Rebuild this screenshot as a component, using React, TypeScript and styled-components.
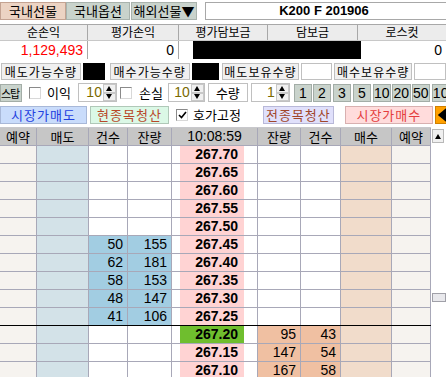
import React from 'react';
import styled, { createGlobalStyle } from 'styled-components';

const Global = createGlobalStyle`
  html, body { margin: 0; padding: 0; background: #fff; }
  body { font-family: "Noto Sans CJK KR", "Noto Sans", sans-serif; font-size: 12px; color: #000; }
  #root { width: 446px; height: 377px; overflow: hidden; }
  * { box-sizing: border-box; }
`;

const KR = `"Noto Sans CJK KR", "Noto Sans", sans-serif`;
const NUM = `"Liberation Sans Narrow", "Liberation Sans", Arial, sans-serif`;

/* ---------- top bar ---------- */
const TopBar = styled.div`
  display: flex;
  align-items: flex-start;
  height: 24px;
  padding-top: 2px;
`;
const Tab = styled.div<{ $active?: boolean; $w: number; $mr: number }>`
  width: ${p => p.$w}px;
  margin-right: ${p => p.$mr}px;
  height: 18px;
  background: ${p => (p.$active ? '#ecd3c3' : '#c9d3cc')};
  border: 1px solid ${p => (p.$active ? '#c4a392' : '#a9b3ad')};
  font-family: ${KR};
  font-size: 13px;
  line-height: 16px;
  text-align: center;
  white-space: nowrap;
`;
const CodeField = styled.div`
  flex: 1;
  height: 18px;
  border: 1px solid #a8a8a8;
  border-right: none;
  font-family: "Liberation Sans", Arial, sans-serif;
  font-weight: bold;
  font-size: 13px;
  line-height: 16px;
  text-align: center;
  padding-right: 4px;
`;

/* ---------- summary ---------- */
const SumHead = styled.div`
  display: grid;
  grid-template-columns: 88px 91px 89px 90px 88px;
  border-top: 1px solid #a8a8a8;
  border-bottom: 1px solid #c8c8c8;
`;
const SumHeadCell = styled.div`
  height: 15px;
  background: #ececec;
  border-right: 1px solid #a8a8a8;
  font-family: ${KR};
  font-size: 12px;
  line-height: 14px;
  text-align: center;
  &:last-child { border-right: none; }
`;
const SumVals = styled.div`
  display: grid;
  grid-template-columns: 88px 91px 14px 168px 85px;
  height: 18px;
`;
const SumVal = styled.div<{ $tone?: 'red' | 'black' | 'plain'; $line?: boolean }>`
  background: ${p => (p.$tone === 'black' ? '#000' : '#fff')};
  color: ${p => (p.$tone === 'red' ? '#ff0000' : '#000')};
  border-right: ${p => (p.$line ? '1px solid #a8a8a8' : 'none')};
  font-family: ${NUM};
  font-size: 14px;
  line-height: 18px;
  text-align: right;
  padding-right: 4px;
`;

/* ---------- qty row ---------- */
const QtyRow = styled.div`
  display: flex;
  margin-top: 4px;
  height: 17px;
`;
const QtyLabel = styled.div<{ $w: number; $ml: number }>`
  width: ${p => p.$w}px;
  margin-left: ${p => p.$ml}px;
  height: 17px;
  background: #f0f0f0;
  border: 1px solid #c0c0c0;
  font-family: ${KR};
  font-size: 12px;
  letter-spacing: 1px;
  line-height: 15px;
  text-align: center;
  white-space: nowrap;
`;
const QtyBox = styled.div<{ $w: number; $ml: number; $dark?: boolean }>`
  width: ${p => p.$w}px;
  margin-left: ${p => p.$ml}px;
  height: 17px;
  background: ${p => (p.$dark ? '#000' : '#fff')};
  border: 1px solid ${p => (p.$dark ? '#000' : '#c0c0c0')};
`;

/* ---------- control row ---------- */
const CtrlRow = styled.div`
  display: flex;
  align-items: center;
  margin-top: 3px;
  height: 19px;
`;
const GreyBtn = styled.div<{ $w: number; $ml: number }>`
  width: ${p => p.$w}px;
  margin-left: ${p => p.$ml}px;
  flex-shrink: 0;
  height: 18px;
  background: #c9d3cc;
  border: 1px solid #a3ada7;
  font-family: ${NUM};
  font-size: 14px;
  line-height: 16px;
  text-align: center;
  overflow: hidden;
  white-space: nowrap;
`;
const StopBtn = styled(GreyBtn)`
  font-family: ${KR};
  font-size: 11px;
  letter-spacing: -1px;
  text-align: left;
  padding: 0;
`;
const Check = styled.div<{ $ml: number }>`
  width: 12px;
  height: 12px;
  margin-left: ${p => p.$ml}px;
  flex-shrink: 0;
  background: #fff;
  border: 1px solid #8a8a8a;
  border-right-color: #d8d8d8;
  border-bottom-color: #d8d8d8;
  display: flex;
  align-items: center;
  justify-content: center;
`;
const Text = styled.span<{ $ml: number }>`
  margin-left: ${p => p.$ml}px;
  font-family: ${KR};
  font-size: 13px;
  line-height: 16px;
  white-space: nowrap;
  flex-shrink: 0;
`;
const Spin = styled.div<{ $w: number; $ml: number }>`
  display: flex;
  width: ${p => p.$w}px;
  margin-left: ${p => p.$ml}px;
  flex-shrink: 0;
  height: 19px;
  border: 1px solid #c0c0c0;
  background: #fff;
`;
const SpinVal = styled.div`
  flex: 1;
  font-family: ${NUM};
  font-size: 14px;
  line-height: 17px;
  color: #7a6a00;
  text-align: right;
  padding-right: 1px;
`;
const SpinArrows = styled.div`
  width: 13px;
  display: flex;
  flex-direction: column;
`;
const SpinArrow = styled.div`
  flex: 1;
  background: #f0f0f0;
  border: 1px solid #c8c8c8;
  display: flex;
  align-items: center;
  justify-content: center;
`;
const LabelBox = styled.div<{ $w: number; $ml: number }>`
  width: ${p => p.$w}px;
  margin-left: ${p => p.$ml}px;
  flex-shrink: 0;
  height: 19px;
  border: 1px solid #c0c0c0;
  font-family: ${KR};
  font-size: 13px;
  line-height: 17px;
  text-align: center;
`;

/* ---------- action row ---------- */
const ActRow = styled.div`
  display: flex;
  align-items: center;
  margin-top: 3px;
  height: 19px;
`;
const ActBtn = styled.div<{ $w: number; $ml: number; $bg: string; $fg: string; $bd: string }>`
  width: ${p => p.$w}px;
  margin-left: ${p => p.$ml}px;
  flex-shrink: 0;
  height: 18px;
  background: ${p => p.$bg};
  color: ${p => p.$fg};
  border: 1px solid ${p => p.$bd};
  font-family: ${KR};
  font-size: 13px;
  letter-spacing: 1px;
  line-height: 16px;
  text-align: center;
  white-space: nowrap;
`;
const ArrowBtn = styled.div`
  width: 15px;
  margin-left: 2px;
  flex-shrink: 0;
  height: 18px;
  background: #ffa000;
  border: 1px solid #d08000;
  display: flex;
  align-items: center;
  justify-content: center;
`;

/* ---------- order book ---------- */
const Book = styled.div`
  display: flex;
  margin-top: 3px;
`;
const Table = styled.div`
  width: 431px;
  display: flex;
  flex-direction: column;
`;
const COLS = '37px 52px 39px 44px 86px 43px 40px 51px 39px';
const HeadRow = styled.div`
  display: grid;
  grid-template-columns: ${COLS};
  height: 19px;
  border-top: 1px solid #c8c8cc;
  border-bottom: 1px solid #a8a8b8;
`;
const HeadCell = styled.div<{ $num?: boolean }>`
  background: #c6c6c6;
  border-right: 1px solid #a8a8b8;
  font-family: ${p => (p.$num ? NUM : KR)};
  font-size: ${p => (p.$num ? '14px' : '13px')};
  line-height: 17px;
  text-align: center;
  white-space: nowrap;
`;
const Row = styled.div<{ $sep?: boolean }>`
  display: grid;
  grid-template-columns: ${COLS};
  height: 18px;
  border-bottom: 1px solid ${p => (p.$sep ? '#000' : '#a8a8b8')};
`;
type Tone = 'reserve' | 'sell' | 'buy' | 'plain' | 'sellHi' | 'buyHi';
const toneBg: Record<Tone, string> = {
  reserve: '#f6f3ef',
  sell: '#d3e2e8',
  buy: '#f1dccb',
  plain: '#ffffff',
  sellHi: '#a2cde2',
  buyHi: '#f0c0a2',
};
const Cell = styled.div<{ $tone: Tone }>`
  background: ${p => toneBg[p.$tone]};
  border-right: 1px solid #a8a8b8;
  font-family: ${NUM};
  font-size: 14px;
  line-height: 17px;
  text-align: right;
  padding-right: 4px;
`;
const PriceCell = styled.div`
  display: flex;
  background: #fff;
  border-right: 1px solid #a8a8b8;
  padding-left: 8px;
`;
const Price = styled.div<{ $cur?: boolean }>`
  width: 64px;
  background: ${p => (p.$cur ? '#6fbe2e' : '#ffd3d3')};
  font-family: "Liberation Sans", Arial, sans-serif;
  font-weight: bold;
  font-size: 14px;
  line-height: 17px;
  text-align: right;
  padding-right: 6px;
`;
const Scroll = styled.div`
  width: 15px;
  display: flex;
  flex-direction: column;
  padding: 2px 2px 0 1px;
`;
const ScrollUp = styled.div`
  height: 14px;
  background: #f0f0f0;
  border: 1px solid #b8b8b8;
  display: flex;
  align-items: center;
  justify-content: center;
`;
const Thumb = styled.div`
  margin-top: 150px;
  margin-right: -2px;
  height: 9px;
  background: #e8e8ec;
  border: 1px solid #a0a0a8;
`;

const Tri = ({ dir, size = 6 }: { dir: 'up' | 'down' | 'left'; size?: number }) => {
  const pts =
    dir === 'up' ? '0,5 3,0 6,5' : dir === 'down' ? '0,0 6,0 3,5' : '6,0 6,10 0,5';
  const w = 6;
  const h = dir === 'left' ? 10 : 5;
  return (
    <svg width={dir === 'left' ? size + 2 : size} height={dir === 'left' ? size + 6 : size - 1} viewBox={`0 0 ${w} ${h}`}>
      <polygon points={pts} fill="#000" />
    </svg>
  );
};

const CheckMark = () => (
  <svg width="9" height="8" viewBox="0 0 9 8">
    <polyline points="1,4 3.5,6.5 8,1" fill="none" stroke="#000" strokeWidth="1.6" />
  </svg>
);

type BookRow = { p: string; sc?: number; sq?: number; bq?: number; bc?: number; cur?: boolean; sep?: boolean };
const rows: BookRow[] = [
  { p: '267.70' },
  { p: '267.65' },
  { p: '267.60' },
  { p: '267.55' },
  { p: '267.50' },
  { p: '267.45', sc: 50, sq: 155 },
  { p: '267.40', sc: 62, sq: 181 },
  { p: '267.35', sc: 58, sq: 153 },
  { p: '267.30', sc: 48, sq: 147 },
  { p: '267.25', sc: 41, sq: 106, sep: true },
  { p: '267.20', bq: 95, bc: 43, cur: true },
  { p: '267.15', bq: 147, bc: 54 },
  { p: '267.10', bq: 167, bc: 58 },
];

const SpinBox = ({ w, ml, v }: { w: number; ml: number; v: string }) => (
  <Spin $w={w} $ml={ml}>
    <SpinVal>{v}</SpinVal>
    <SpinArrows>
      <SpinArrow><Tri dir="up" /></SpinArrow>
      <SpinArrow><Tri dir="down" /></SpinArrow>
    </SpinArrows>
  </Spin>
);

export default function App() {
  const qtyBtns = [
    { t: '1', ml: 4, w: 18 },
    { t: '2', ml: 1, w: 18 },
    { t: '3', ml: 2, w: 18 },
    { t: '5', ml: 2, w: 18 },
    { t: '10', ml: 2, w: 18 },
    { t: '20', ml: 1, w: 19 },
    { t: '50', ml: 1, w: 18 },
    { t: '100', ml: 2, w: 24 },
  ];
  return (
    <>
      <Global />
      <TopBar>
        <Tab $active $w={66} $mr={0}>국내선물</Tab>
        <Tab $w={64} $mr={1}>국내옵션</Tab>
        <Tab $w={66} $mr={8}>해외선물▼</Tab>
        <CodeField>K200 F 201906</CodeField>
      </TopBar>

      <SumHead>
        <SumHeadCell>순손익</SumHeadCell>
        <SumHeadCell>평가손익</SumHeadCell>
        <SumHeadCell>평가담보금</SumHeadCell>
        <SumHeadCell>담보금</SumHeadCell>
        <SumHeadCell>로스컷</SumHeadCell>
      </SumHead>
      <SumVals>
        <SumVal $tone="red" $line>1,129,493</SumVal>
        <SumVal $line>0</SumVal>
        <SumVal />
        <SumVal $tone="black" />
        <SumVal>0</SumVal>
      </SumVals>

      <QtyRow>
        <QtyLabel $w={80} $ml={1}>매도가능수량</QtyLabel>
        <QtyBox $w={22} $ml={2} $dark />
        <QtyLabel $w={80} $ml={5}>매수가능수량</QtyLabel>
        <QtyBox $w={27} $ml={2} $dark />
        <QtyLabel $w={78} $ml={3}>매도보유수량</QtyLabel>
        <QtyBox $w={31} $ml={2} />
        <QtyLabel $w={78} $ml={2}>매수보유수량</QtyLabel>
        <QtyBox $w={32} $ml={2} />
      </QtyRow>

      <CtrlRow>
        <StopBtn $w={22} $ml={0}>스탑</StopBtn>
        <Check $ml={7} />
        <Text $ml={6}>이익</Text>
        <SpinBox w={39} ml={7} v="10" />
        <Check $ml={3} />
        <Text $ml={7}>손실</Text>
        <SpinBox w={37} ml={5} v="10" />
        <LabelBox $w={40} $ml={3}>수량</LabelBox>
        <SpinBox w={39} ml={3} v="1" />
        {qtyBtns.map(b => (
          <GreyBtn key={b.t} $w={b.w} $ml={b.ml}>{b.t}</GreyBtn>
        ))}
      </CtrlRow>

      <ActRow>
        <ActBtn $w={87} $ml={0} $bg="#c9dcfb" $fg="#1f3fe0" $bd="#a8b8d8">시장가매도</ActBtn>
        <ActBtn $w={79} $ml={3} $bg="#dbf8e6" $fg="#b8482a" $bd="#b0c8b8">현종목청산</ActBtn>
        <Check $ml={7}><CheckMark /></Check>
        <Text $ml={5}>호가고정</Text>
        <ActBtn $w={71} $ml={22} $bg="#e0e0fb" $fg="#a0462a" $bd="#b8b8d8">전종목청산</ActBtn>
        <ActBtn $w={88} $ml={11} $bg="#ffdcdc" $fg="#e43c3c" $bd="#d8b0b0">시장가매수</ActBtn>
        <ArrowBtn><Tri dir="left" size={8} /></ArrowBtn>
      </ActRow>

      <Book>
        <Table>
          <HeadRow>
            <HeadCell>예약</HeadCell>
            <HeadCell>매도</HeadCell>
            <HeadCell>건수</HeadCell>
            <HeadCell>잔량</HeadCell>
            <HeadCell $num>10:08:59</HeadCell>
            <HeadCell>잔량</HeadCell>
            <HeadCell>건수</HeadCell>
            <HeadCell>매수</HeadCell>
            <HeadCell>예약</HeadCell>
          </HeadRow>
          {rows.map(r => (
            <Row key={r.p} $sep={r.sep}>
              <Cell $tone="reserve" />
              <Cell $tone="sell" />
              <Cell $tone={r.sc != null ? 'sellHi' : 'plain'}>{r.sc}</Cell>
              <Cell $tone={r.sq != null ? 'sellHi' : 'plain'}>{r.sq}</Cell>
              <PriceCell>
                <Price $cur={r.cur}>{r.p}</Price>
              </PriceCell>
              <Cell $tone={r.bq != null ? 'buyHi' : 'plain'}>{r.bq}</Cell>
              <Cell $tone={r.bc != null ? 'buyHi' : 'plain'}>{r.bc}</Cell>
              <Cell $tone="buy" />
              <Cell $tone="reserve" />
            </Row>
          ))}
        </Table>
        <Scroll>
          <ScrollUp><Tri dir="up" /></ScrollUp>
          <Thumb />
        </Scroll>
      </Book>
    </>
  );
}
